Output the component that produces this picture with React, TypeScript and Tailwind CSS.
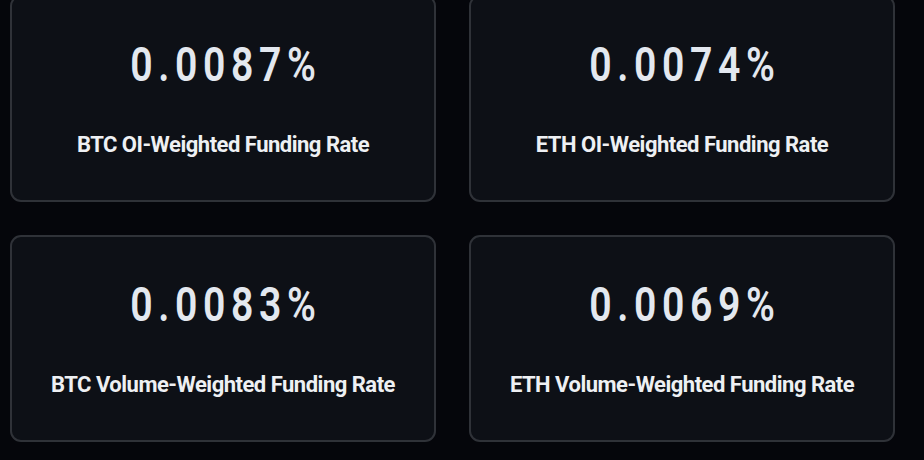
const stats = [
  { value: "0.0087%", label: "BTC OI-Weighted Funding Rate" },
  { value: "0.0074%", label: "ETH OI-Weighted Funding Rate" },
  { value: "0.0083%", label: "BTC Volume-Weighted Funding Rate" },
  { value: "0.0069%", label: "ETH Volume-Weighted Funding Rate" },
];

function StatCard({ value, label }: { value: string; label: string }) {
  return (
    <div className="h-[207px] rounded-[11px] border-2 border-[#2f3238] bg-[#0d1016] flex flex-col items-center">
      <div className="mt-[38px] h-[60px] flex items-center justify-center">
        <span className="inline-block origin-center scale-x-[0.8] pl-[7px] text-[49px] font-semibold tracking-[7px] text-[#e3e8ef] font-['Roboto',sans-serif]">
          {value}
        </span>
      </div>
      <div className="mt-[36px] leading-[28px] text-[22px] font-bold tracking-[-0.5px] text-[#eef0f3] font-['Roboto',sans-serif]">
        {label}
      </div>
    </div>
  );
}

export default function App() {
  return (
    <div className="w-[924px] h-[460px] overflow-hidden bg-[#05060b]">
      <div className="-mt-[5px] pl-[10px] pr-[29px] grid grid-cols-2 gap-x-[33px] gap-y-[33px]">
        {stats.map((s) => (
          <StatCard key={s.label} value={s.value} label={s.label} />
        ))}
      </div>
    </div>
  );
}
